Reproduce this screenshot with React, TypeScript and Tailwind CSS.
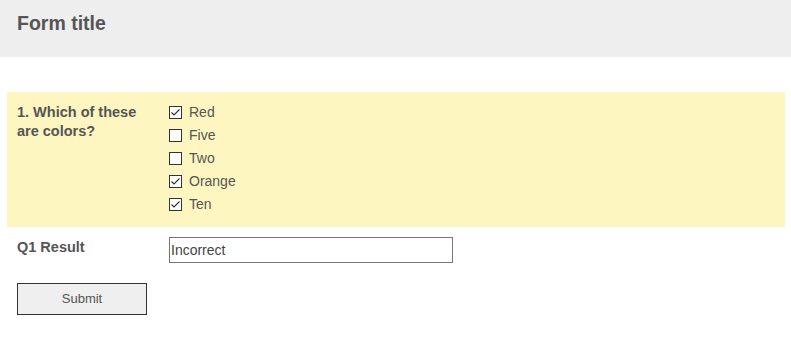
import React from "react";

const options = [
  { label: "Red", checked: true },
  { label: "Five", checked: false },
  { label: "Two", checked: false },
  { label: "Orange", checked: true },
  { label: "Ten", checked: true },
];

function Box({ checked }: { checked: boolean }) {
  return (
    <span className="flex h-[13px] w-[13px] shrink-0 items-center justify-center border border-[#333333] bg-white">
      {checked && (
        <svg width="11" height="11" viewBox="0 0 11 11" fill="none">
          <path d="M1.5 5.5 L4 8 L9.5 2.5" stroke="#333333" strokeWidth="1.2" />
        </svg>
      )}
    </span>
  );
}

export default function App() {
  return (
    <div className="w-[791px] h-[352px] bg-white text-[#555555]" style={{ fontFamily: '"Liberation Sans", Arial, sans-serif' }}>
      <div className="h-[57px] bg-[#eeeeee] pl-[17px] pt-[12px]">
        <h1 className="text-[19.5px] leading-[23px] font-bold">Form title</h1>
      </div>
      <div className="mt-[35px] ml-[7px] mr-[6px] flex bg-[#fdf6c1] pt-[9px] pb-[11px] pl-[10px]">
        <div className="w-[152px] shrink-0 pr-[10px] pt-[2px] text-[14.5px] leading-[19px] font-bold">
          1. Which of these are colors?
        </div>
        <div className="flex flex-col">
          {options.map((o) => (
            <label key={o.label} className="flex h-[23px] items-center gap-[7px] text-[14px]">
              <Box checked={o.checked} />
              <span>{o.label}</span>
            </label>
          ))}
        </div>
      </div>
      <div className="mt-[10px] flex pl-[17px]">
        <div className="w-[152px] shrink-0 pt-[1px] text-[14.5px] leading-[19px] font-bold">Q1 Result</div>
        <div className="flex h-[26px] w-[284px] items-center border border-[#767676] bg-white pl-[1px] text-[14px] text-[#444444]">
          Incorrect
        </div>
      </div>
      <div className="mt-[20px] pl-[17px]">
        <button className="h-[32px] w-[130px] border border-[#333333] bg-[#efefef] text-[13px] text-[#555555]">
          Submit
        </button>
      </div>
    </div>
  );
}
